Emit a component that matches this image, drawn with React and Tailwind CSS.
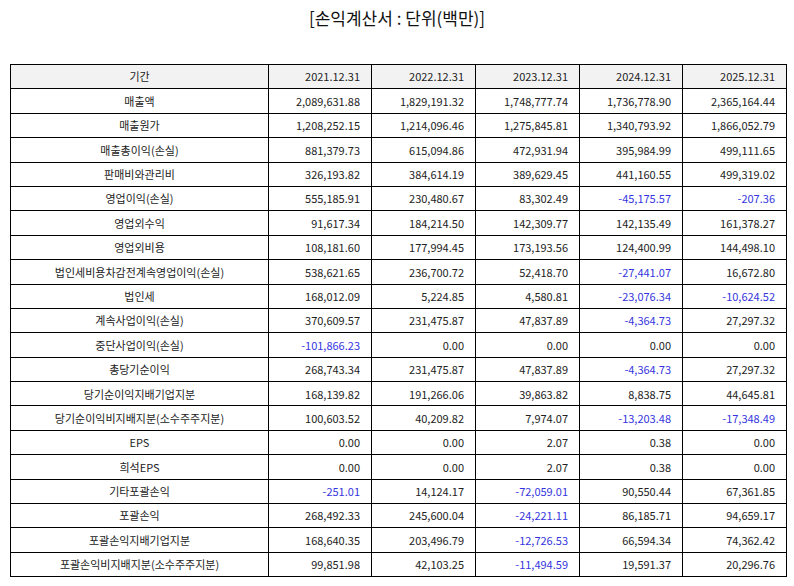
const years = ["2021.12.31", "2022.12.31", "2023.12.31", "2024.12.31", "2025.12.31"];

const rows = [
  ["매출액", "2,089,631.88", "1,829,191.32", "1,748,777.74", "1,736,778.90", "2,365,164.44"],
  ["매출원가", "1,208,252.15", "1,214,096.46", "1,275,845.81", "1,340,793.92", "1,866,052.79"],
  ["매출총이익(손실)", "881,379.73", "615,094.86", "472,931.94", "395,984.99", "499,111.65"],
  ["판매비와관리비", "326,193.82", "384,614.19", "389,629.45", "441,160.55", "499,319.02"],
  ["영업이익(손실)", "555,185.91", "230,480.67", "83,302.49", "-45,175.57", "-207.36"],
  ["영업외수익", "91,617.34", "184,214.50", "142,309.77", "142,135.49", "161,378.27"],
  ["영업외비용", "108,181.60", "177,994.45", "173,193.56", "124,400.99", "144,498.10"],
  ["법인세비용차감전계속영업이익(손실)", "538,621.65", "236,700.72", "52,418.70", "-27,441.07", "16,672.80"],
  ["법인세", "168,012.09", "5,224.85", "4,580.81", "-23,076.34", "-10,624.52"],
  ["계속사업이익(손실)", "370,609.57", "231,475.87", "47,837.89", "-4,364.73", "27,297.32"],
  ["중단사업이익(손실)", "-101,866.23", "0.00", "0.00", "0.00", "0.00"],
  ["총당기순이익", "268,743.34", "231,475.87", "47,837.89", "-4,364.73", "27,297.32"],
  ["당기순이익지배기업지분", "168,139.82", "191,266.06", "39,863.82", "8,838.75", "44,645.81"],
  ["당기순이익비지배지분(소수주주지분)", "100,603.52", "40,209.82", "7,974.07", "-13,203.48", "-17,348.49"],
  ["EPS", "0.00", "0.00", "2.07", "0.38", "0.00"],
  ["희석EPS", "0.00", "0.00", "2.07", "0.38", "0.00"],
  ["기타포괄손익", "-251.01", "14,124.17", "-72,059.01", "90,550.44", "67,361.85"],
  ["포괄손익", "268,492.33", "245,600.04", "-24,221.11", "86,185.71", "94,659.17"],
  ["포괄손익지배기업지분", "168,640.35", "203,496.79", "-12,726.53", "66,594.34", "74,362.42"],
  ["포괄손익비지배지분(소수주주지분)", "99,851.98", "42,103.25", "-11,494.59", "19,591.37", "20,296.76"],
];

export default function App() {
  return (
    <div
      className="w-[794px] h-[586px] bg-white text-[#222]"
      style={{ fontFamily: '"Noto Sans CJK KR", "Noto Sans", sans-serif' }}
    >
      <div className="h-[40px] pt-[5px] text-center text-[17px] leading-[26px] text-[#111]">
        [손익계산서 : 단위(백만)]
      </div>
      <div className="px-[10px] pt-[24px]">
        <table className="w-[776px] border-collapse table-fixed text-[11px]">
          <colgroup>
            <col className="w-[258px]" />
            <col className="w-[103px]" />
            <col className="w-[104px]" />
            <col className="w-[104px]" />
            <col className="w-[103px]" />
            <col className="w-[104px]" />
          </colgroup>
          <thead>
            <tr className="h-[24.4px] bg-[#f2f2f2]">
              <th className="border border-black font-normal text-center p-0">기간</th>
              {years.map((y) => (
                <th key={y} className="border border-black font-normal text-right pr-[11px] p-0">
                  {y}
                </th>
              ))}
            </tr>
          </thead>
          <tbody>
            {rows.map((r) => (
              <tr key={r[0]} className="h-[24.4px]">
                <td className="border border-black text-center p-0">{r[0]}</td>
                {r.slice(1).map((v, i) => (
                  <td
                    key={i}
                    className={
                      v.startsWith("-")
                        ? "border border-black text-right pr-[11px] p-0 text-[#3535e0]"
                        : "border border-black text-right pr-[11px] p-0"
                    }
                  >
                    {v}
                  </td>
                ))}
              </tr>
            ))}
          </tbody>
        </table>
      </div>
    </div>
  );
}
